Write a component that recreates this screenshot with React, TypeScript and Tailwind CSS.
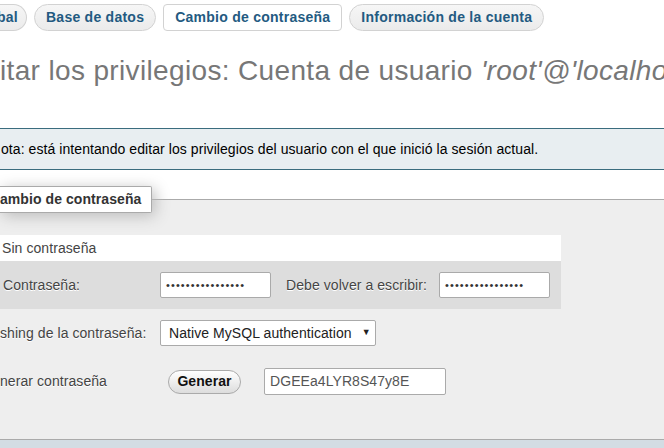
const tabClass =
    'flex h-[27px] items-center rounded-full border border-[#d2d2d2] bg-gradient-to-b from-[#f6f6f6] to-[#ebebeb] px-[11px] font-bold tracking-[0.25px] text-[#235a81]';

function Dots() {
    return <span className="text-[11px] tracking-[1.1px] text-[#333]">{'•'.repeat(16)}</span>;
}

export default function App() {
    return (
        <div className="h-[448px] w-[664px] overflow-hidden bg-white font-['Liberation_Sans',Arial,sans-serif] text-[14px] tracking-[0.07px] text-[#444]">
            {/* tabs */}
            <div className="flex gap-[7px] pt-[4px]">
                <div className={`${tabClass} w-[27px] rounded-l-none border-l-0 pl-0`}>
                    <span className="-ml-[3px]">bal</span>
                </div>
                <div className={tabClass}>Base de datos</div>
                <div className="flex h-[27px] items-center rounded-[4px] border border-[#d2d2d2] bg-white px-[11px] font-bold tracking-[0.25px] text-[#235a81]">
                    Cambio de contraseña
                </div>
                <div className={tabClass}>Información de la cuenta</div>
            </div>

            {/* heading */}
            <h2 className="mt-[23px] whitespace-nowrap text-[28px] leading-[34px] tracking-[0.35px] text-[#777] [text-shadow:0_1px_0_#fff]">
                itar los privilegios: Cuenta de usuario <i>'root'@'localhost'</i>
            </h2>

            {/* notice */}
            <div className="mt-[40px] flex h-[42px] items-center border-y border-[#3a6c7e] bg-[#e8eef1] pl-[1px] text-black">
                ota: está intentando editar los privilegios del usuario con el que inició la sesión actual.
            </div>

            {/* fieldset */}
            <fieldset className="mt-[16px] border-y border-[#aaa] bg-[#eee] pb-[44px] pt-[22px] [text-shadow:0_1px_0_#fff]">
                <legend className="rounded-r-[2px] border border-l-0 border-[#aaa] bg-white py-[5px] pl-0 pr-[10px] font-bold leading-[15px] text-[#333] shadow-[3px_3px_15px_#bbb]">
                    ambio de contraseña
                </legend>

                <div className="w-[561px]">
                    <div className="flex h-[26px] items-center bg-white pl-[2px]">Sin contraseña</div>
                    <div className="flex h-[48px] items-center bg-[#ddd] pl-[3px]">
                        <span className="w-[157px]">Contraseña:</span>
                        <div className="flex h-[26px] w-[111px] items-center rounded-[2px] border border-[#aaa] bg-white pl-[5px]">
                            <Dots />
                        </div>
                        <span className="ml-[15px] w-[153px]">Debe volver a escribir:</span>
                        <div className="flex h-[26px] w-[111px] items-center rounded-[2px] border border-[#aaa] bg-white pl-[5px]">
                            <Dots />
                        </div>
                    </div>
                </div>

                <div className="mt-[11px] flex items-center">
                    <span className="w-[160px]">shing de la contraseña:</span>
                    <div className="flex h-[26px] w-[216px] items-center gap-[10px] rounded-[2px] border border-[#aaa] bg-white pl-[8px] text-[#222]">
                        Native MySQL authentication
                        <span className="text-[9px]">▼</span>
                    </div>
                </div>

                <div className="mt-[22px] flex items-center">
                    <span className="w-[168px]">nerar contraseña</span>
                    <button className="flex h-[24px] w-[73px] items-center justify-center rounded-full border border-[#aaa] bg-gradient-to-b from-[#fff] to-[#ddd] font-bold text-[#111]">
                        Generar
                    </button>
                    <div className="ml-[23px] flex h-[27px] w-[182px] items-center rounded-[2px] border border-[#aaa] bg-white pl-[5px] text-[#555]">
                        DGEEa4LYR8S47y8E
                    </div>
                </div>
            </fieldset>
            <div className="h-[40px] bg-[#d3dce3]" />
        </div>
    );
}
